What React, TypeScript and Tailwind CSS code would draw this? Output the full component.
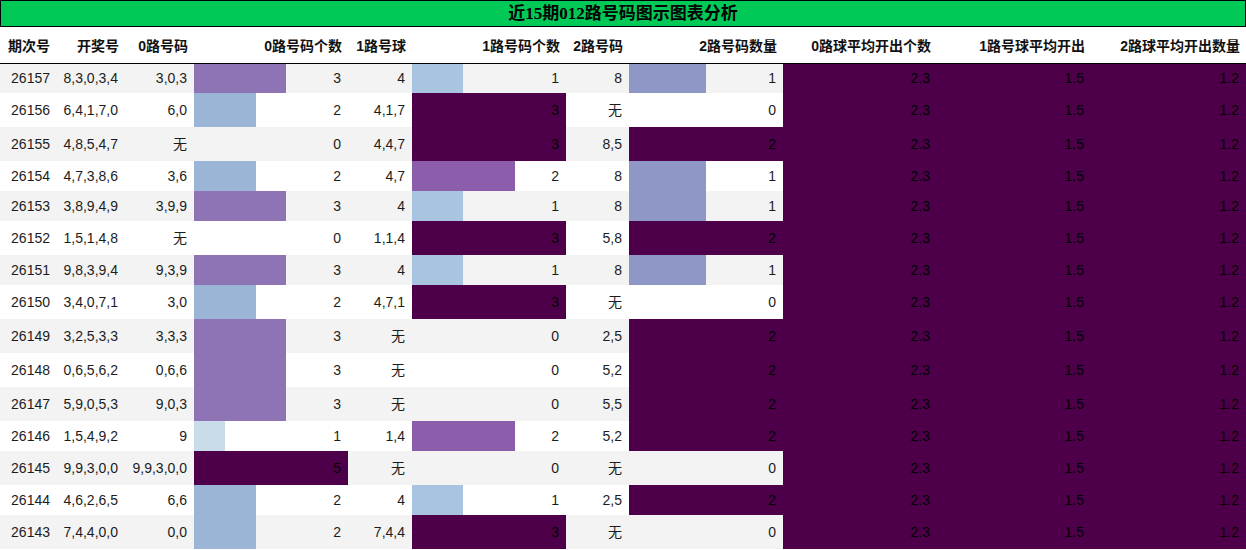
import React from "react";

type Row = {
  id: string;
  draw: string;
  r0: string;
  c0: number;
  r1: string;
  c1: number;
  r2: string;
  c2: number;
  tall: boolean;
};

const rows: Row[] = [
  { id: "26157", draw: "8,3,0,3,4", r0: "3,0,3", c0: 3, r1: "4", c1: 1, r2: "8", c2: 1, tall: false },
  { id: "26156", draw: "6,4,1,7,0", r0: "6,0", c0: 2, r1: "4,1,7", c1: 3, r2: "无", c2: 0, tall: true },
  { id: "26155", draw: "4,8,5,4,7", r0: "无", c0: 0, r1: "4,4,7", c1: 3, r2: "8,5", c2: 2, tall: true },
  { id: "26154", draw: "4,7,3,8,6", r0: "3,6", c0: 2, r1: "4,7", c1: 2, r2: "8", c2: 1, tall: false },
  { id: "26153", draw: "3,8,9,4,9", r0: "3,9,9", c0: 3, r1: "4", c1: 1, r2: "8", c2: 1, tall: false },
  { id: "26152", draw: "1,5,1,4,8", r0: "无", c0: 0, r1: "1,1,4", c1: 3, r2: "5,8", c2: 2, tall: true },
  { id: "26151", draw: "9,8,3,9,4", r0: "9,3,9", c0: 3, r1: "4", c1: 1, r2: "8", c2: 1, tall: false },
  { id: "26150", draw: "3,4,0,7,1", r0: "3,0", c0: 2, r1: "4,7,1", c1: 3, r2: "无", c2: 0, tall: true },
  { id: "26149", draw: "3,2,5,3,3", r0: "3,3,3", c0: 3, r1: "无", c1: 0, r2: "2,5", c2: 2, tall: true },
  { id: "26148", draw: "0,6,5,6,2", r0: "0,6,6", c0: 3, r1: "无", c1: 0, r2: "5,2", c2: 2, tall: true },
  { id: "26147", draw: "5,9,0,5,3", r0: "9,0,3", c0: 3, r1: "无", c1: 0, r2: "5,5", c2: 2, tall: true },
  { id: "26146", draw: "1,5,4,9,2", r0: "9", c0: 1, r1: "1,4", c1: 2, r2: "5,2", c2: 2, tall: false },
  { id: "26145", draw: "9,9,3,0,0", r0: "9,9,3,0,0", c0: 5, r1: "无", c1: 0, r2: "无", c2: 0, tall: true },
  { id: "26144", draw: "4,6,2,6,5", r0: "6,6", c0: 2, r1: "4", c1: 1, r2: "2,5", c2: 2, tall: false },
  { id: "26143", draw: "7,4,4,0,0", r0: "0,0", c0: 2, r1: "7,4,4", c1: 3, r2: "无", c2: 0, tall: true },
];

const DARK = "#4d0049";

function barColor(value: number, max: number): string {
  if (value >= max) return DARK;
  const key = `${value}/${max}`;
  const map: Record<string, string> = {
    "1/5": "#c9dcea",
    "2/5": "#9bb5d6",
    "3/5": "#8e74b5",
    "4/5": "#8a5ba8",
    "1/3": "#a9c4e0",
    "2/3": "#8c5daa",
    "1/2": "#8e97c6",
  };
  return map[key] ?? "#9bb5d6";
}

function BarCell({ value, max, label }: { value: number; max: number; label: string }) {
  const pct = max > 0 ? (value / max) * 100 : 0;
  const color = barColor(value, max);
  const style: React.CSSProperties =
    value > 0
      ? { background: `linear-gradient(to right, ${color} 0%, ${color} ${pct}%, transparent ${pct}%)` }
      : {};
  return (
    <td className={`p-0 pr-[7px] text-right ${value >= max ? "text-black" : ""}`} style={style}>
      {label}
    </td>
  );
}

const headers = [
  "期次号",
  "开奖号",
  "0路号码",
  "0路号码个数",
  "1路号球",
  "1路号码个数",
  "2路号码",
  "2路号码数量",
  "0路球平均开出个数",
  "1路号球平均开出",
  "2路球平均开出数量",
];

export default function App() {
  return (
    <div
      className="w-[1246px] bg-white text-[14px] text-[#1c1c1c]"
      style={{ fontFamily: '"Liberation Sans", "Noto Sans CJK SC", sans-serif' }}
    >
      <div
        className="h-[27px] border border-black bg-[#00c957] flex items-center justify-center text-[17px] font-bold text-black leading-none"
        style={{ fontFamily: '"Liberation Serif", "Noto Sans CJK SC", serif' }}
      >
        近15期012路号码图示图表分析
      </div>
      <table className="w-[1246px] table-fixed border-collapse">
        <colgroup>
          <col className="w-[56px]" />
          <col className="w-[69px]" />
          <col className="w-[69px]" />
          <col className="w-[154px]" />
          <col className="w-[64px]" />
          <col className="w-[154px]" />
          <col className="w-[63px]" />
          <col className="w-[154px]" />
          <col className="w-[154px]" />
          <col className="w-[154px]" />
          <col className="w-[155px]" />
        </colgroup>
        <thead>
          <tr className="h-[36px] border-b border-black">
            {headers.map((h) => (
              <th key={h} className="p-0 pt-[3px] pr-[6px] text-right font-bold text-[#111] whitespace-nowrap">
                {h}
              </th>
            ))}
          </tr>
        </thead>
        <tbody>
          {rows.map((r, i) => (
            <tr
              key={r.id}
              className={`${r.tall ? "h-[34px]" : "h-[30px]"} ${i % 2 === 0 ? "bg-[#f3f3f3]" : "bg-white"}`}
            >
              <td className="p-0 pr-[6px] text-right">{r.id}</td>
              <td className="p-0 pr-[7px] text-right">{r.draw}</td>
              <td className="p-0 pr-[7px] text-right">{r.r0}</td>
              <BarCell value={r.c0} max={5} label={String(r.c0)} />
              <td className="p-0 pr-[7px] text-right">{r.r1}</td>
              <BarCell value={r.c1} max={3} label={String(r.c1)} />
              <td className="p-0 pr-[7px] text-right">{r.r2}</td>
              <BarCell value={r.c2} max={2} label={String(r.c2)} />
              <BarCell value={1} max={1} label="2.3" />
              <BarCell value={1} max={1} label="1.5" />
              <BarCell value={1} max={1} label="1.2" />
            </tr>
          ))}
        </tbody>
      </table>
    </div>
  );
}
